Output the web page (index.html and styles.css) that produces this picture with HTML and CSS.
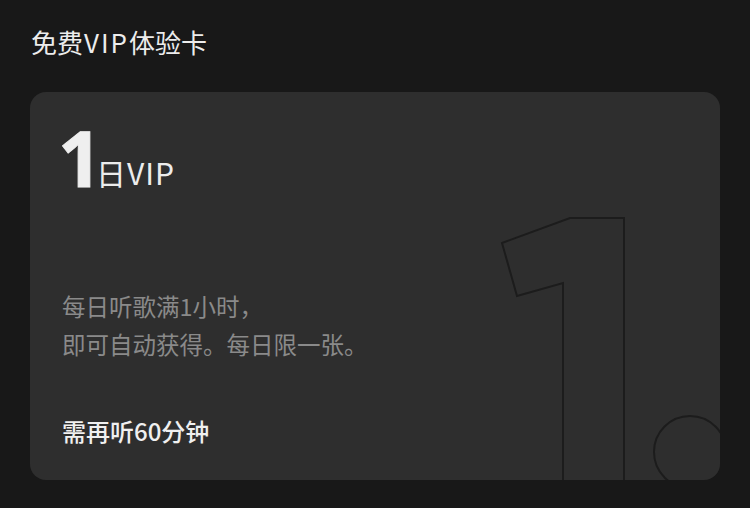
FILE: index.html
```html
<!DOCTYPE html>
<html lang="zh-CN">
<head>
<meta charset="utf-8">
<link rel="stylesheet" href="styles.css">
</head>
<body>
<div class="page">
  <h1 class="title">免费<span class="lat">VIP</span>体验卡</h1>
  <div class="card">
    <svg class="deco" width="690" height="388" viewBox="0 0 690 388">
      <path d="M472 151 L540 126 L594 126 L594 400 L533 400 L533 191 L487 204 Z" fill="none" stroke="#1c1c1c" stroke-width="2"/>
      <circle cx="660" cy="360" r="36" fill="none" stroke="#1c1c1c" stroke-width="2"/>
    </svg>
    <div class="head">
      <span class="num">1</span><span class="unit">日<span class="lat-s">VIP</span></span>
    </div>
    <p class="desc">每日听歌满1小时，<br>即可自动获得。每日限一张。</p>
    <p class="remain">需再听60分钟</p>
  </div>
</div>
</body>
</html>
```
FILE: styles.css
```css
html, body {
  margin: 0;
  padding: 0;
  background: #181818;
}
body {
  width: 750px;
  height: 508px;
  overflow: hidden;
  font-family: "Noto Sans CJK SC", sans-serif;
}
.page {
  padding: 23px 30px 0 30px;
}
.title {
  margin: 0 0 0 1px;
  font-size: 26px;
  line-height: 38px;
  font-weight: 400;
  color: #ececec;
  font-family: "Noto Sans CJK SC", sans-serif;
}
.lat {
  letter-spacing: 2px;
  margin-left: 1px;
}
.card {
  position: relative;
  margin-top: 31px;
  height: 388px;
  width: 690px;
  border-radius: 16px;
  background: #2e2e2e;
  overflow: hidden;
  box-sizing: border-box;
  padding: 26px 32px 0 28px;
}
.deco {
  position: absolute;
  left: 0;
  top: 0;
}
.head {
  position: relative;
  display: flex;
  align-items: baseline;
  height: 80px;
}
.num {
  font-size: 77px;
  font-weight: 700;
  line-height: 80px;
  color: #efefef;
  font-family: "Noto Sans", sans-serif;
  -webkit-text-stroke: 1px #efefef;
  letter-spacing: -6px;
}
.unit {
  margin-left: 0;
  font-size: 30px;
  line-height: 38px;
  color: #ececec;
  font-family: "Noto Sans CJK SC", sans-serif;
  position: relative;
  top: -2px;
}
.lat-s {
  letter-spacing: 1px;
  margin-left: 1px;
}
.desc {
  position: relative;
  margin: 89px 0 0 4px;
  font-size: 23.5px;
  line-height: 38px;
  color: #8a8a8a;
  font-family: "Noto Sans CJK SC", sans-serif;
}
.remain {
  position: relative;
  margin: 52px 0 0 4px;
  font-size: 24px;
  line-height: 32px;
  color: #f0f0f0;
  font-weight: 500;
  font-family: "Noto Sans CJK SC", sans-serif;
}
```
